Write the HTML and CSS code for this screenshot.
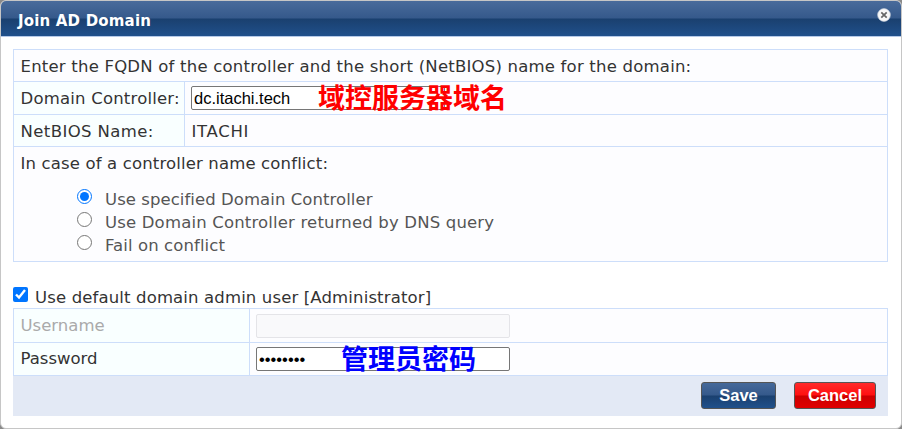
FILE: index.html
```html
<!DOCTYPE html>
<html lang="en">
<head>
<meta charset="utf-8">
<title>Join AD Domain</title>
<link rel="stylesheet" href="styles.css">
</head>
<body>
<div class="dialog">
  <header class="titlebar">
    <h1><span>Join AD Domain</span></h1>
    <svg class="close" viewBox="0 0 14 14" width="14" height="14"><circle cx="7" cy="7" r="6.4" fill="#f8f8f8" stroke="#c3cbd7" stroke-width=".6"/><path d="M4.3 4.3L9.7 9.7M9.7 4.3L4.3 9.7" stroke="#666" stroke-width="1.7"/></svg>
  </header>
  <main>
    <section class="domain">
      <div class="cell wide intro"><span class="t-intro">Enter the FQDN of the controller and the short (NetBIOS) name for the domain:</span></div>
      <div class="cell label"><span class="t-dc">Domain Controller:</span></div>
      <div class="cell value field"><input type="text" value="dc.itachi.tech"><span class="note red">域控服务器域名</span></div>
      <div class="cell label netbios"><span class="t-nb">NetBIOS Name:</span></div>
      <div class="cell value netbios"><span class="t-it">ITACHI</span></div>
      <div class="cell wide conflict">
        <p><span class="t-case">In case of a controller name conflict:</span></p>
        <div class="options">
          <label><input type="radio" name="c" checked><span class="t-o1">Use specified Domain Controller</span></label>
          <label><input type="radio" name="c"><span class="t-o2">Use Domain Controller returned by DNS query</span></label>
          <label><input type="radio" name="c"><span class="t-o3">Fail on conflict</span></label>
        </div>
      </div>
    </section>
    <label class="default-user"><input type="checkbox" checked><span class="t-def">Use default domain admin user [Administrator]</span></label>
    <section class="account">
      <div class="cell label muted"><span class="t-user">Username</span></div>
      <div class="cell value field"><input type="text" disabled></div>
      <div class="cell label"><span class="t-pw">Password</span></div>
      <div class="cell value field"><input type="password" value="password"><span class="note blue">管理员密码</span></div>
    </section>
    <footer>
      <button class="save">Save</button>
      <button class="cancel">Cancel</button>
    </footer>
  </main>
</div>
</body>
</html>
```
FILE: styles.css
```css
* { box-sizing: border-box; }
body {
  margin: 0;
  height: 429px;
  overflow: hidden;
  background: #8a8a8a;
  font: 16.5px/20px "DejaVu Sans", Verdana, sans-serif;
  color: #333;
}
.dialog {
  width: 902px;
  height: 429px;
  border: 1px solid #c6c6c6;
  border-radius: 6px;
  background: #fff;
  overflow: hidden;
}
.titlebar {
  display: flex;
  justify-content: space-between;
  height: 36px;
  padding: 0 10px 0 17px;
  border-bottom: 1px solid #b5c9e8;
  background: linear-gradient(#496b9b 0, #35598b 17px, #1a406f 18px, #20508b 35px);
}
h1 {
  margin: 0;
  font-size: 15px;
  letter-spacing: .18px;
  line-height: 41px;
  color: #fff;
  white-space: nowrap;
}
.close { margin-top: 7px; }
main { padding: 12px 13px 0 12px; }
.domain, .account {
  display: grid;
  border: solid #cddefa;
  border-width: 1px 0 0 1px;
}
.domain {
  grid-template-columns: 171px 1fr;
  grid-template-rows: 32px 33px 32px 115px;
}
.account {
  grid-template-columns: 236px 1fr;
  grid-template-rows: 34px 33px;
}
.cell {
  display: flex;
  align-items: center;
  padding: 1px 0 0 7px;
  border: solid #cddefa;
  border-width: 0 1px 1px 0;
  background: #fdfdff;
  white-space: nowrap;
}
.label { background: #f9ffff; }
.account .label { padding-top: 0; }
.intro, .netbios { padding-top: 3px; }
.cell > span:not(.note) { margin-left: -.5px; }
.wide { grid-column: 1 / 3; }
.muted { color: #aaa; }
.field {
  position: relative;
  padding: 0 0 0 6px;
}
.field input {
  width: 254px;
  height: 24px;
  margin: 0;
  padding: 1px 2px;
  border: 1px solid #767676;
  border-radius: 2px;
  background: #fff;
  color: #000;
  font: 16.5px "Liberation Sans", Arial, sans-serif;
}
.field input:disabled {
  border-color: #e4e4e8;
  background: #f9f9fb;
}
.note {
  position: absolute;
  top: -2px;
  font: bold 27px/33px "Noto Sans CJK SC", sans-serif;
}
.red { left: 133px; color: #f00; }
.blue { left: 91px; color: #00f; }
.conflict { display: block; }
.conflict p { margin: 6px 0 0 -.5px; }
.options {
  padding: 14px 0 0 56px;
  color: #555;
}
.options label {
  display: flex;
  height: 23px;
}
.options span { padding-top: 2px; }
.options input {
  width: 15px;
  height: 15px;
  margin: 1px 13px 0 0;
  accent-color: #0075ff;
}
.default-user {
  display: flex;
  height: 46px;
  padding-top: 25px;
}
.default-user span { padding-top: 1px; }
.default-user input {
  width: 15px;
  height: 15px;
  margin: 0 7px 0 0;
  accent-color: #0075ff;
}
.t-intro { letter-spacing: .21px; }
.t-dc { letter-spacing: .2px; }
.t-nb { letter-spacing: .4px; }
.t-it { letter-spacing: .7px; }
.t-case { letter-spacing: .15px; }
.t-o1 { letter-spacing: .06px; }
.t-o2 { letter-spacing: .17px; }
.t-o3 { letter-spacing: .1px; }
.t-def { letter-spacing: .14px; }
footer {
  display: flex;
  justify-content: flex-end;
  gap: 18px;
  height: 40px;
  padding: 6px 12px 0 0;
  background: #e3e9f5;
}
button {
  width: 75px;
  height: 27px;
  padding: 0 0 1px;
  border: 1px solid #555;
  border-radius: 3px;
  color: #fff;
  font: bold 16.5px/24px "Liberation Sans", Arial, sans-serif;
}
.save { background: linear-gradient(#46699a 0, #35598b 12px, #1a406f 13px, #20508b 100%); }
.cancel {
  width: 82px;
  background: linear-gradient(#ff2a2a 0, #ff1010 12px, #cc0000 13px, #e00000 100%);
}
```
